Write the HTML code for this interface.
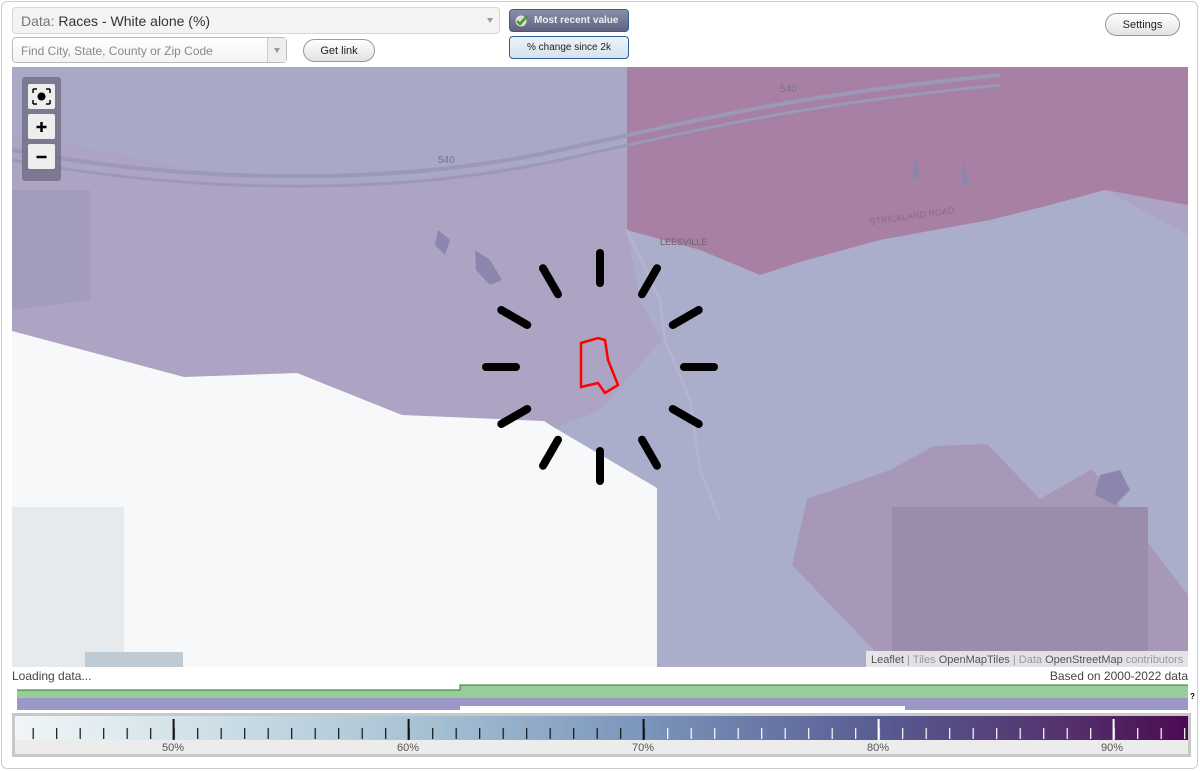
<!DOCTYPE html>
<html><head><meta charset="utf-8"><style>
*{box-sizing:border-box}
body{margin:0;width:1200px;height:771px;background:#fff;font-family:"Liberation Sans",Arial,sans-serif;position:relative;overflow:hidden}
.frame{position:absolute;left:1px;top:1px;width:1197px;height:768px;border:1px solid #ccc;border-radius:6px}
.abs{position:absolute}
.sel{left:12px;top:7px;width:488px;height:27px;background:#f3f3f3;border:1px solid #d6d6d6;border-radius:4px;font-size:14px;color:#333;padding:5px 8px}
.sel span{color:#777}
.arr{position:absolute;right:6px;top:10px;width:0;height:0;border-left:3px solid transparent;border-right:3px solid transparent;border-top:5px solid #999}
.srch{left:12px;top:37px;width:275px;height:26px;background:#fff;border:1px solid #bbb;border-radius:4px;font-size:12px;color:#888;padding:6px 8px;background:linear-gradient(#fff,#f3f3f3)}
.srch .dd{position:absolute;right:0;top:0;width:19px;height:24px;border-left:1px solid #ccc;background:#eee}
.btn{border:1px solid #999;border-radius:12px;background:linear-gradient(#fff,#e2e2e2);font-size:11px;color:#222;text-align:center}
.mr{left:509px;top:9px;width:120px;height:23px;border:1px solid #2d5d9a;border-radius:4px;background:linear-gradient(#8a8ea8,#5f6380);color:#eee;font-size:10px;font-weight:bold;padding:5px 0 0 24px}
.pc{left:509px;top:36px;width:120px;height:23px;border:1px solid #2d5d9a;border-radius:4px;background:linear-gradient(#eef3f8,#d5e2ef);color:#222;font-size:10px;text-align:center;padding-top:5px}
</style></head><body>
<div class="frame"></div>
<div class="abs sel"><span>Data:</span> Races - White alone (%)<div class="arr"></div></div>
<div class="abs srch">Find City, State, County or Zip Code<div class="dd"><div class="arr" style="right:6px;top:10px"></div></div></div>
<div class="abs btn" style="left:303px;top:39px;width:72px;height:23px;padding-top:5px">Get link</div>
<div class="abs mr"><svg style="position:absolute;left:5px;top:4px" width="14" height="13" viewBox="0 0 14 13"><circle cx="6" cy="7" r="5.5" fill="#ddd"/><path d="M2 7 L5 10 L12 2" stroke="#4a9a2a" stroke-width="2.5" fill="none"/></svg>Most recent value</div>
<div class="abs pc">% change since 2k</div>
<div class="abs btn" style="left:1105px;top:13px;width:75px;height:23px;padding-top:5px">Settings</div>

<svg class="abs" style="left:0;top:0" width="1200" height="771" viewBox="0 0 1200 771">
<defs><clipPath id="mc"><rect x="12" y="67" width="1176" height="600"/></clipPath>
<linearGradient id="lg" x1="0" x2="1"><stop offset="0" stop-color="#f1f6f8"/><stop offset=".14" stop-color="#d3e3ea"/><stop offset=".34" stop-color="#a9c3d5"/><stop offset=".54" stop-color="#7a94bb"/><stop offset=".74" stop-color="#585b91"/><stop offset=".9" stop-color="#54306c"/><stop offset="1" stop-color="#4b0a52"/></linearGradient>
<pattern id="pb" x="32.6" y="0" width="23.5" height="800" patternUnits="userSpaceOnUse"><rect x="0" y="728" width="1.2" height="11" fill="#111"/></pattern>
<pattern id="pw" x="32.6" y="0" width="23.5" height="800" patternUnits="userSpaceOnUse"><rect x="0" y="728" width="1.2" height="11" fill="#fff"/></pattern>
</defs>
<g clip-path="url(#mc)">
<rect x="12" y="67" width="1176" height="600" fill="#ada4c4"/>
<path d="M12 67H627V150L520 165L400 180L300 185L200 170L100 150L12 135Z" fill="#a9a8c6"/>
<path d="M12 190H90V300L12 310Z" fill="#a49cbd"/>
<path d="M627 67H1188V205L1105 190L1050 205L990 220L880 240L800 262L760 275L700 250L640 235L627 230Z" fill="#a780a3"/>
<path d="M627 230L700 250L760 275L800 262L880 240L990 220L1050 205L1105 190L1188 235V667H657V488L555 428L600 410L662 340L640 300Z" fill="#abaecb"/>
<path d="M792 565L807 499L890 470L934 446L987 444L1040 499L1092 469L1188 595V667H890Z" fill="#a898b8"/>
<rect x="892" y="507" width="256" height="160" fill="#9a8dab"/>
<path d="M12 331L184 377L297 373L402 415L544 421L555 428L657 488V667H12Z" fill="#f6f8f9"/>
<rect x="12" y="507" width="112" height="160" fill="#e7eaec"/>
<rect x="85" y="652" width="98" height="15" fill="#bfcbd4"/>
<path d="M12 150 C200 185 400 185 560 150 S 800 95 1000 75" stroke="#9b98b8" stroke-width="4" fill="none"/>
<path d="M12 160 C200 195 400 195 560 160 S 800 105 1000 85" stroke="#9b98b8" stroke-width="3" fill="none"/>
<path d="M627 230L660 300L665 340L690 400L700 470L720 520" stroke="#b5b3cf" stroke-width="3" fill="none"/>
<path d="M438 230 L450 240 L445 255 L435 245Z M475 250 L490 260 L502 280 L490 285 L476 270Z M915 155L920 175L912 180Z M963 160L970 185L962 185Z M1100 475 L1120 470 L1130 490 L1115 505 L1095 495Z" fill="#8a86ad"/>
<text x="780" y="92" font-size="10" fill="#777">540</text><text x="438" y="163" font-size="10" fill="#777">540</text>
<text x="660" y="245" font-size="9" fill="#666">LEESVILLE</text>
<text x="870" y="225" font-size="9" fill="#8a6a8a" transform="rotate(-8 870 225)">STRICKLAND ROAD</text>
<path d="M581 343L598 338L605 340L608 360L618 385L605 393L598 383L581 387Z" fill="none" stroke="#f00" stroke-width="2.5"/>
<g stroke="#000" stroke-width="8" stroke-linecap="round" transform="translate(600 367)">
<line x1="0" y1="-84" x2="0" y2="-114"/><line x1="0" y1="-84" x2="0" y2="-114" transform="rotate(30)"/><line x1="0" y1="-84" x2="0" y2="-114" transform="rotate(60)"/><line x1="0" y1="-84" x2="0" y2="-114" transform="rotate(90)"/><line x1="0" y1="-84" x2="0" y2="-114" transform="rotate(120)"/><line x1="0" y1="-84" x2="0" y2="-114" transform="rotate(150)"/><line x1="0" y1="-84" x2="0" y2="-114" transform="rotate(180)"/><line x1="0" y1="-84" x2="0" y2="-114" transform="rotate(210)"/><line x1="0" y1="-84" x2="0" y2="-114" transform="rotate(240)"/><line x1="0" y1="-84" x2="0" y2="-114" transform="rotate(270)"/><line x1="0" y1="-84" x2="0" y2="-114" transform="rotate(300)"/><line x1="0" y1="-84" x2="0" y2="-114" transform="rotate(330)"/>
</g>
<rect x="22" y="77" width="39" height="104" rx="3" fill="#6e6a80" opacity=".75"/>
<rect x="28" y="84" width="27" height="25" rx="2" fill="#eee"/><rect x="28" y="114" width="27" height="25" rx="2" fill="#eee"/><rect x="28" y="144" width="27" height="25" rx="2" fill="#eee"/>
<circle cx="41.5" cy="96.5" r="4" fill="#000"/><path d="M33 89h4M33 89v4M50 89h-4M50 89v4M33 104h4M33 104v-4M50 104h-4M50 104v-4" stroke="#000" stroke-width="1.5"/>
<path d="M41.5 122v10M36.5 127h10" stroke="#000" stroke-width="2.5"/><path d="M36.5 157h10" stroke="#000" stroke-width="2.5"/>
<rect x="866" y="651" width="322" height="16" fill="#f0f0f0" opacity=".85"/>
<text x="871" y="663" font-size="11" fill="#999"><tspan fill="#555">Leaflet</tspan> | Tiles <tspan fill="#555">OpenMapTiles</tspan> | Data <tspan fill="#555">OpenStreetMap</tspan> contributors</text>
</g>
<text x="12" y="680" font-size="12" fill="#444">Loading data...</text>
<text x="1188" y="680" font-size="12" fill="#444" text-anchor="end">Based on 2000-2022 data</text>
<path d="M17 690H460V685H1188V698H17Z" fill="#99cc99"/><path d="M17 690H460V685H1188" stroke="#2a7a2a" fill="none"/>
<path d="M17 698H1188V710H905V706H460V710H17Z" fill="#9b98c8"/>
<text x="1190" y="699" font-size="8" font-weight="bold" fill="#000">?</text>
<rect x="13.5" y="714.5" width="1176" height="41" fill="#ececec" stroke="#c8c8c8" stroke-width="3"/>
<rect x="15" y="716" width="1173" height="24" fill="url(#lg)"/>
<rect x="20" y="716" width="635" height="24" fill="url(#pb)"/>
<rect x="655" y="716" width="533" height="24" fill="url(#pw)"/>
<g stroke-width="2"><path d="M173.6 719v21M408.6 719v21M643.6 719v21" stroke="#111"/><path d="M878.6 719v21M1113.6 719v21" stroke="#fff"/></g>
<g font-size="11" fill="#555" text-anchor="middle"><text x="173" y="751">50%</text><text x="408" y="751">60%</text><text x="643" y="751">70%</text><text x="878" y="751">80%</text><text x="1112" y="751">90%</text></g>
</svg>
</body></html>
